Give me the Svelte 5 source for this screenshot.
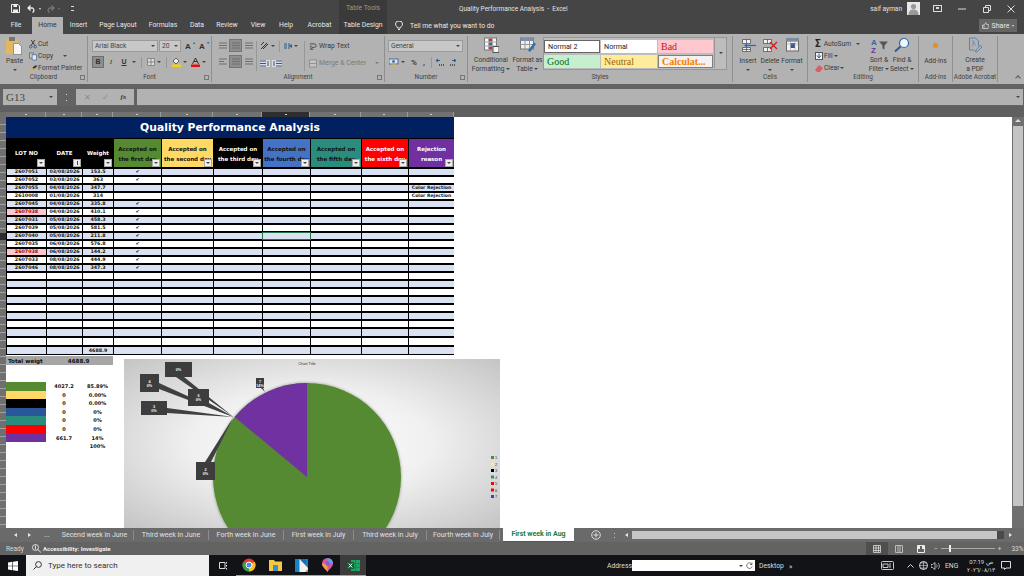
<script>
  const tabs = [
    ['File', 32], ['Home', 31], ['Insert', 31], ['Page Layout', 48], ['Formulas', 42], ['Data', 26],
    ['Review', 34], ['View', 28], ['Help', 28], ['Acrobat', 39], ['Table Design', 48]
  ];

  const cols = [40, 36, 31, 48, 52, 49, 48, 51, 47, 46];

  const heads = [
    { c: 'black', a: 'LOT NO' },
    { c: 'black', a: 'DATE', sort: true },
    { c: 'black', a: 'Weight' },
    { c: 'green dk', a: 'Accepted on', b: 'the first day' },
    { c: 'yellow dk', a: 'Accepted on', b: 'the second day' },
    { c: 'black', a: 'Accepted on', b: 'the third day' },
    { c: 'blue dk', a: 'Accepted on', b: 'the fourth day' },
    { c: 'teal dk', a: 'Accepted on', b: 'the fifth day' },
    { c: 'red', a: 'Accepted on', b: 'the sixth day' },
    { c: 'purple', a: 'Rejection', b: 'reason' }
  ];

  const lots = [
    ['2607051', '03/08/2026', '153.5', 1, ''],
    ['2607052', '03/08/2026', '363', 1, ''],
    ['2607055', '04/08/2026', '347.7', 0, 'Color Rejection'],
    ['2610008', '01/08/2026', '314', 0, 'Color Rejection'],
    ['2607045', '04/08/2026', '335.8', 1, ''],
    ['2607038', '04/08/2026', '410.1', 1, ''],
    ['2607031', '05/08/2026', '458.3', 1, ''],
    ['2607039', '05/08/2026', '581.5', 1, ''],
    ['2607040', '05/08/2026', '211.8', 1, ''],
    ['2607035', '06/08/2026', '576.8', 1, ''],
    ['2607038', '06/08/2026', '144.2', 1, ''],
    ['2607033', '08/08/2026', '444.9', 1, ''],
    ['2607046', '08/08/2026', '347.3', 1, '']
  ];
  const rows = Array.from({ length: 23 }, (_, i) => lots[i] || ['', '', i === 22 ? '4688.9' : '', 0, '']);

  const legend = [
    ['green', '4027.2', '85.89%'], ['yellow', '0', '0.00%'], ['black', '0', '0.00%'], ['navy', '0', '0%'],
    ['teal', '0', '0%'], ['red', '0', '0%'], ['purple', '661.7', '14%'], ['none', '', '100%']
  ];

  const sheets = [
    ['Secend week in June', 78], ['Third week in June', 75], ['Forth week in June', 75],
    ['First week in July', 70], ['Third week in July', 73], ['Fourth week in July', 73]
  ];

  const callouts = [
    { x: 165, y: 362, w: 27, h: 15, a: '', b: '0%' },
    { x: 140, y: 374, w: 19, h: 18, a: '4', b: '0%' },
    { x: 188, y: 389, w: 21, h: 17, a: '6', b: '0%' },
    { x: 141, y: 401, w: 26, h: 14, a: '3', b: '0%' },
    { x: 196, y: 462, w: 19, h: 18, a: '2', b: '0%' },
    { x: 256, y: 378, w: 8, h: 10, a: '7', b: '14%' }
  ];

  // leader lines narrow down to the point where the zero slices sit
  const leaders = [
    '176,377 184,377 233.5,417',
    '159,383 159,389 233.5,417',
    '203,405 209,403 233.5,417',
    '167,408 167,413 233.5,417',
    '205,462 211,462 233.5,417',
    '261,388 263,388 265,392'
  ];

  const chartLegend = ['#568a30', '#ffe699', '#000', '#2a8c7c', '#f00', '#f00', '#7030a0'];
</script>

<div class="app">
  <div class="titlebar">
    <div class="qat">
      <svg width="9" height="9" viewBox="0 0 9 9"><path d="M.5.5h6.500l1.500 1.500v6.500h-8z" fill="none" stroke="#eee"/><path d="M2.500 1h3.500v2h-3.500zM2 5.500h5v3h-5z" fill="#eee"/></svg>
      <svg class="undo" width="9" height="8" viewBox="0 0 9 8"><path d="M3.500.5L1 3l2.500 2.500M1 3h4.500a2.500 2.500 0 0 1 0 4.500" fill="none" stroke="#eee" stroke-width="1.300"/></svg>
      <span class="tiny-caret"></span>
      <svg class="redo" width="9" height="8" viewBox="0 0 9 8"><path d="M5.500.5L8 3 5.500 5.500M8 3H3.500a2.500 2.500 0 0 0 0 4.500" fill="none" stroke="#777" stroke-width="1.300"/></svg>
      <span class="tiny-caret dim"></span>
      <span class="custom"></span>
    </div>
    <div class="tools">Table Tools</div>
    <div class="doc">Quality Performance Analysis &nbsp;-&nbsp; Excel</div>
    <div class="user">saif ayman</div>
    <div class="avatar">
      <svg width="13" height="13" viewBox="0 0 13 13"><rect width="13" height="13" fill="#e8e8e8"/><circle cx="6.500" cy="4.500" r="2.600" fill="#999"/><path d="M1.500 13c0-4 2-5.500 5-5.500s5 1.500 5 5.500z" fill="#999"/></svg>
    </div>
    <div class="winctl">
      <svg width="9" height="7" viewBox="0 0 9 7"><rect x=".5" y=".5" width="8" height="6" fill="none" stroke="#ddd"/><path d="M3 2h3v2H3z" fill="#ddd"/></svg>
      <svg width="8" height="7" viewBox="0 0 8 7"><path d="M0 4h8" stroke="#ddd"/></svg>
      <svg width="8" height="8" viewBox="0 0 8 8"><path d="M.5 2.500h5v5h-5zM2.500 2.500v-2h5v5h-2" fill="none" stroke="#ddd"/></svg>
      <svg width="8" height="8" viewBox="0 0 8 8"><path d="M.5.500l7 7M7.500.500l-7 7" stroke="#ddd"/></svg>
    </div>
  </div>

  <div class="tabbar">
    {#each tabs as [name, w]}
      <div class="tab" class:active={name === 'Home'} class:design={name === 'Table Design'} style="width:{w}px">{name}</div>
    {/each}
    <svg class="bulb" width="8" height="10" viewBox="0 0 8 10"><path d="M2.500 7c0-1.500-2-2-2-4a3.500 3 0 0 1 7 0c0 2-2 2.500-2 4zM3 8.500h2" fill="none" stroke="#e8e8e8"/></svg>
    <div class="tell">Tell me what you want to do</div>
    <div class="share">
      <svg width="7" height="7" viewBox="0 0 7 7"><path d="M.5 3h1.500v3.500H.5zM2 3l2-2.500.5 2h2L6 6.500H2" fill="none" stroke="#ddd" stroke-width=".7"/></svg>
      Share <span class="tiny-caret"></span>
    </div>
  </div>

  <div class="ribbon">
    <section class="g clip">
      <div class="body">
        <div class="big paste">
          <svg width="17" height="19" viewBox="0 0 17 19"><rect x="0" y="3" width="12" height="15" fill="#e0b860"/><rect x="3" y="1" width="6" height="4" fill="#777"/><path d="M7.500 7.500h5l3 3v8h-8z" fill="#f6f6f6" stroke="#666" stroke-width=".6"/></svg>
          <span>Paste</span>
          <span class="caret"></span>
        </div>
        <div class="stack">
          <div class="line">
            <svg width="8" height="10" viewBox="0 0 9 10"><circle cx="2" cy="8" r="1.500" fill="none" stroke="#2a5a8a"/><circle cx="7" cy="8" r="1.500" fill="none" stroke="#2a5a8a"/><path d="M2.500 6.500L6.500.5M6.500 6.500L2.500.5" stroke="#333"/></svg>
            <span>Cut</span>
          </div>
          <div class="line">
            <svg width="8" height="9" viewBox="0 0 9 9"><path d="M.5.500h4.500v6H.5z" fill="#ccc" stroke="#667"/><path d="M3.500 2.500H8.500v6h-5z" fill="#e8e8e8" stroke="#57a"/></svg>
            <span>Copy</span><span class="caret push"></span>
          </div>
          <div class="line">
            <svg width="8" height="9" viewBox="0 0 9 9"><path d="M4 3l4-2.500 1 2-4 2.500z" fill="#333"/><path d="M.5 8l3.500-5 1.500 2.500z" fill="#e8a838"/></svg>
            <span>Format Painter</span>
          </div>
        </div>
      </div>
      <div class="lbl">Clipboard</div>
      <i class="launch"></i>
    </section>

    <section class="g font">
      <div class="body rows">
        <div class="r">
          <div class="select fname"><span>Arial Black</span><span class="caret"></span></div>
          <div class="select fsize"><span>20</span><span class="caret"></span></div>
          <b class="grow">A<sup>▴</sup></b>
          <b class="shrink">A<sup>▾</sup></b>
        </div>
        <div class="r tools-row">
          <span class="tb on bold">B</span>
          <span class="tb ital">I</span>
          <span class="tb under">U</span><span class="caret"></span>
          <span class="v"></span>
          <svg width="8" height="8" viewBox="0 0 8 8"><path d="M.5.500h7v7h-7zM4 .5v7M.5 4h7" fill="#ddd" stroke="#888"/></svg><span class="caret"></span>
          <span class="v"></span>
          <svg width="9" height="10" viewBox="0 0 9 10"><path d="M1 4l3-3 3 3-3 3z" fill="#eee" stroke="#444" stroke-width=".8"/><rect y="7.500" width="9" height="2.500" fill="#f2d21a"/></svg><span class="caret"></span>
          <svg width="9" height="10" viewBox="0 0 9 10"><path d="M1.500 7l3-6 3 6M3 4.500h3" fill="none" stroke="#333"/><rect y="7.500" width="9" height="2.500" fill="#e01010"/></svg><span class="caret"></span>
        </div>
      </div>
      <div class="lbl">Font</div>
      <i class="launch"></i>
    </section>

    <section class="g align">
      <div class="body">
        <div class="agrid">
          {#each ['top', 'mid on', 'bot', 'left', 'cen on', 'right'] as a}
            <span class="al {a}">
              <svg width="8" height="7" viewBox="0 0 8 7"><path d="M0 1h8M0 3.500h{a.startsWith('left') ? 5 : 8}M0 6h8" stroke="#6f6f6f" stroke-width="1.100"/></svg>
            </span>
          {/each}
        </div>
        <span class="vline first"></span>
        <div class="acol">
          <div class="ac-row">
            <svg width="9" height="8" viewBox="0 0 9 8"><path d="M1 7l6-6M3 7l5-5M1 3l3-3" stroke="#333"/></svg><span class="caret"></span>
            <span class="v"></span>
            <svg width="8" height="6" viewBox="0 0 8 6"><path d="M0 1h3M0 3h3M0 5h3M5 0v6" stroke="#2a5a9a"/><path d="M5 3l3-2v4z" fill="#2a5a9a"/></svg><span class="caret"></span>
          </div>
          <div class="ac-row">
            <svg width="10" height="7" viewBox="0 0 10 7"><rect width="10" height="7" fill="#ddd"/><path d="M0 1h6M0 3.500h6M0 6h6M8 1v5" stroke="#2a5a9a"/></svg>
            <svg width="10" height="7" viewBox="0 0 10 7"><rect width="10" height="7" fill="#ddd"/><path d="M4 1h6M4 3.500h6M4 6h6M2 1v5" stroke="#2a5a9a"/></svg>
          </div>
        </div>
        <span class="vline"></span>
        <div class="acol wide">
          <div class="ac-row">
            <svg width="8" height="9" viewBox="0 0 9 9"><path d="M1 1.500h5a2 2 0 0 1 0 4H3M1 4h1M1 7.500h4" fill="none" stroke="#444"/><path d="M3.500 3.500L1.500 5.500 3.500 7.500" fill="none" stroke="#2a5a9a"/></svg>
            <span class="txt">Wrap Text</span>
          </div>
          <div class="ac-row muted">
            <svg width="8" height="9" viewBox="0 0 9 9"><rect x=".5" y=".5" width="8" height="8" fill="#c4c4c4" stroke="#8c8c8c"/><path d="M1 4.500h7" stroke="#8c8c8c"/></svg>
            <span class="txt">Merge &amp; Center</span><span class="caret far"></span>
          </div>
        </div>
      </div>
      <div class="lbl">Alignment</div>
      <i class="launch"></i>
    </section>

    <section class="g number">
      <div class="body rows">
        <div class="select general"><span>General</span><span class="caret"></span></div>
        <div class="r nrow">
          <svg width="10" height="9" viewBox="0 0 10 9"><rect y="1" width="9" height="5" fill="#d8e4f2" stroke="#2a5a9a" stroke-width=".8"/><circle cx="4.500" cy="3.500" r="1.300" fill="#2a5a9a"/><path d="M2 6.500h6l-1 2H4z" fill="#e8b838"/></svg><span class="caret"></span>
          <b class="pct">%</b>
          <b class="comma">,</b>
          <span class="v"></span>
          <svg width="9" height="9" viewBox="0 0 9 9"><path d="M0 2.500h4M2 1L0 2.500 2 4" fill="none" stroke="#2a5a9a"/><path d="M3 7h6" stroke="#555" stroke-dasharray="1 1" stroke-width="2"/></svg>
          <svg width="9" height="9" viewBox="0 0 9 9"><path d="M5 2.500h4M7 1l2 1.500L7 4" fill="none" stroke="#2a5a9a"/><path d="M3 7h6" stroke="#555" stroke-dasharray="1 1" stroke-width="2"/></svg>
        </div>
      </div>
      <div class="lbl">Number</div>
      <i class="launch"></i>
    </section>

    <section class="g styles">
      <div class="body">
        <div class="big cf">
          <svg width="15" height="15" viewBox="0 0 15 15"><rect x=".5" y=".5" width="12" height="12" fill="#f5f5f5" stroke="#777"/><path d="M.5 4.500h12M.5 8.500h12M4.500 .5v12M8.500 .5v12" stroke="#aaa"/><rect x="5" y="1" width="3" height="3" fill="#d03030"/><rect x="5" y="5" width="3" height="3" fill="#2a6ab0"/><rect x="5" y="9" width="3" height="3" fill="#d03030"/><rect x="9" y="9" width="6" height="6" fill="#f4f4f4" stroke="#555"/></svg>
          <span>Conditional</span>
          <span>Formatting <i class="caret"></i></span>
        </div>
        <div class="big fat">
          <svg width="16" height="15" viewBox="0 0 16 15"><rect x=".5" y=".5" width="13" height="11" fill="#eee" stroke="#777"/><rect x=".5" y=".5" width="13" height="3" fill="#7d8ea8"/><path d="M.5 7h13M5 3.500v8M9.500 3.500v8" stroke="#999"/><path d="M8 13l6-8 2 1.500-6 8z" fill="#2f6fb0"/></svg>
          <span>Format as</span>
          <span>Table <i class="caret"></i></span>
        </div>
        <div class="gallery">
          <div class="cell n2">Normal 2</div>
          <div class="cell nm">Normal</div>
          <div class="cell bad">Bad</div>
          <div class="cell good">Good</div>
          <div class="cell neutral">Neutral</div>
          <div class="cell calc">Calculat...</div>
          <div class="more"><span class="caret"></span></div>
        </div>
      </div>
      <div class="lbl">Styles</div>
    </section>

    <section class="g cells">
      <div class="body">
        <div class="big bcell">
          <svg width="15" height="15" viewBox="0 0 15 15"><path d="M1.500 1.500h8v4h-8zM1.500 9.500h8v4h-8zM5.500 1.500v4M5.500 9.500v4M1.500 11.500h8" fill="#f2f2f2" stroke="#555" stroke-width=".8"/><path d="M6 7.500h9" stroke="#2a6ab0" stroke-width="1.300"/><path d="M3 7.500l3-2v4z" fill="#2a6ab0"/></svg>
          <span>Insert</span><span class="caret"></span>
        </div>
        <div class="big bcell">
          <svg width="16" height="15" viewBox="0 0 16 15"><path d="M1.500 1.500h8v4h-8zM1.500 9.500h8v4h-8zM5.500 1.500v4M5.500 9.500v4" fill="#f2f2f2" stroke="#555" stroke-width=".8"/><path d="M8 4l7 7M15 4l-7 7" stroke="#c92020" stroke-width="1.300"/></svg>
          <span>Delete</span><span class="caret"></span>
        </div>
        <div class="big bcell">
          <svg width="15" height="16" viewBox="0 0 15 16"><path d="M1 1.500h13" stroke="#2a6ab0"/><rect x="1.500" y="3.500" width="12" height="10" fill="#f4f4f4" stroke="#666"/><rect x="5.500" y="5.500" width="4.500" height="5" fill="#2a5aa0"/><path d="M1.500 6.500h12M5.500 3.500v10M10 3.500v10" stroke="#999" stroke-width=".6"/></svg>
          <span>Format</span><span class="caret"></span>
        </div>
      </div>
      <div class="lbl">Cells</div>
    </section>

    <section class="g editing">
      <div class="body">
        <div class="stack ed">
          <div class="line"><b class="sigma">Σ</b><span>AutoSum</span><span class="caret push"></span></div>
          <div class="line">
            <svg width="8" height="8" viewBox="0 0 8 8"><rect x=".5" y=".5" width="7" height="7" fill="#f4f4f4" stroke="#555"/><path d="M4 1.500v3.500M2 3.500L4 6l2-2.500" fill="none" stroke="#2a5aa0"/></svg>
            <span>Fill</span><span class="caret"></span>
          </div>
          <div class="line">
            <svg width="8" height="7" viewBox="0 0 8 7"><path d="M0 5l4-5 4 3-3 4H2z" fill="#d8606a"/></svg>
            <span>Clear</span><span class="caret"></span>
          </div>
        </div>
        <div class="big sort">
          <svg width="17" height="15" viewBox="0 0 17 15"><text x="0" y="7" class="az a">A</text><text x="0" y="15" class="az z">Z</text><path d="M8 4h9l-3.500 4v4l-2-1V8z" fill="#555"/></svg>
          <span>Sort &amp;</span><span>Filter <i class="caret"></i></span>
        </div>
        <div class="big find">
          <svg width="16" height="15" viewBox="0 0 16 15"><circle cx="10" cy="5.500" r="4.500" fill="#f2f6fa" stroke="#2a6ab0" stroke-width="1.200"/><path d="M6.500 9L1 14" stroke="#2a5aa0" stroke-width="2"/></svg>
          <span>Find &amp;</span><span>Select <i class="caret"></i></span>
        </div>
      </div>
      <div class="lbl">Editing</div>
    </section>

    <section class="g addins">
      <div class="body">
        <div class="big">
          <svg width="15" height="15" viewBox="0 0 15 15"><circle cx="7.500" cy="7.500" r="2.700" fill="#ed8f1f"/></svg>
          <span>Add-ins</span>
        </div>
      </div>
      <div class="lbl">Add-ins</div>
    </section>

    <section class="g acro">
      <div class="body">
        <div class="big">
          <svg width="15" height="15" viewBox="0 0 15 15"><path d="M2.500.5h6l3 3v5M2.500.5v12h5" fill="none" stroke="#5484b8"/><path d="M5 9c2-3 1-5 1-6 1 1 1 4 3 5" fill="none" stroke="#5484b8" stroke-width=".7"/><path d="M8 14l5-6 2 1.500-5 5z" fill="none" stroke="#5484b8"/></svg>
          <span>Create</span>
          <span>a PDF</span>
        </div>
      </div>
      <div class="lbl">Adobe Acrobat</div>
    </section>

    <div class="collapse"><span class="up"></span></div>
  </div>

  <div class="formula">
    <div class="namebox"><span>G13</span><span class="caret"></span></div>
    <div class="dots"></div>
    <div class="fbtns">
      <span class="x">✕</span><span class="x">✓</span><em>fx</em>
    </div>
    <div class="finput"><span class="caret"></span></div>
  </div>

  <div class="ruler">
    <div class="corner"></div>
    {#each cols as w, i}
      <div class="rc" class:sel={i === 6} style="width:{w}px"><i></i></div>
    {/each}
  </div>

  <div class="sheet">
    <div class="rowhead">
      <span class="selrow"></span>
    </div>
    <div class="grid-wrap">
      <div class="table">
        <div class="title">Quality Performance Analysis</div>
        {#each heads as h}
          <div class="head {h.c}">
            <div class="htext" class:single={!h.b}>
              <span>{h.a}</span>
              {#if h.b}<span>{h.b}</span>{/if}
            </div>
            <span class="filter" class:sorted={h.sort}></span>
          </div>
        {/each}
        {#each rows as row, i}
          <div class="c" class:alt={i % 2 === 0} class:flag={row[0] === '2607038'}>{row[0]}</div>
          <div class="c" class:alt={i % 2 === 0}>{row[1]}</div>
          <div class="c" class:alt={i % 2 === 0}>{row[2]}</div>
          <div class="c" class:alt={i % 2 === 0}>{row[3] ? '✔' : ''}</div>
          <div class="c" class:alt={i % 2 === 0}></div>
          <div class="c" class:alt={i % 2 === 0}></div>
          <div class="c" class:alt={i % 2 === 0} class:current={i === 8}></div>
          <div class="c" class:alt={i % 2 === 0}></div>
          <div class="c" class:alt={i % 2 === 0}></div>
          <div class="c reason" class:alt={i % 2 === 0}>{row[4]}</div>
        {/each}
      </div>

      <div class="total"><span>Total weigt</span><span>4688.9</span></div>

      <div class="legend">
        {#each legend as [color, value, pct]}
          <span class="sw {color}"></span>
          <span>{value}</span>
          <span>{pct}</span>
        {/each}
      </div>
    </div>

    <div class="chart">
      <svg width="376" height="169" viewBox="124 359 376 169">
        <defs>
          <filter id="soft" x="-10%" y="-10%" width="120%" height="120%">
            <feDropShadow dx="0" dy="0" stdDeviation="1.500" flood-color="#000" flood-opacity=".4"/>
          </filter>
        </defs>
        <text x="307" y="364.500" class="ctitle">Chart Title</text>
        <g filter="url(#soft)">
          <circle cx="307" cy="477" r="94" fill="#568a30"/>
          <path d="M307 477V383A94 94 0 0 0 234.600 417z" fill="#7030a0"/>
        </g>
        {#each leaders as points}
          <polygon {points} fill="#404040"/>
        {/each}
        {#each callouts as k}
          <rect x={k.x} y={k.y} width={k.w} height={k.h} fill="#3d3d3d"/>
          {#if k.a}
            <text x={k.x + k.w / 2} y={k.y + k.h / 2 - .5} class="cl">{k.a}</text>
            <text x={k.x + k.w / 2} y={k.y + k.h / 2 + 3.500} class="cl">{k.b}</text>
          {:else}
            <text x={k.x + k.w / 2} y={k.y + k.h / 2 + 1.500} class="cl">{k.b}</text>
          {/if}
        {/each}
        {#each chartLegend as color, i}
          <rect x="491" y={456 + i * 6.500} width="3" height="3" fill={color}/>
          <text x="495" y={459 + i * 6.500} class="lg">{i + 1}</text>
        {/each}
      </svg>
    </div>

    <div class="vscroll"><span class="upbtn"></span><span class="thumb"></span></div>
  </div>

  <div class="sheetbar">
    <div class="nav">
      <span class="tri l"></span><span class="tri r"></span><span class="ell">...</span>
    </div>
    {#each sheets as [name, w]}
      <div class="stab" style="width:{w}px">{name}</div>
    {/each}
    <div class="stab current">First week in Aug</div>
    <svg class="plus" width="10" height="10" viewBox="0 0 10 10"><circle cx="5" cy="5" r="4.300" fill="none" stroke="#ddd"/><path d="M5 2.500v5M2.500 5h5" stroke="#ddd"/></svg>
    <span class="vdots"></span>
    <div class="hscroll">
      <span class="tri l"></span>
      <span class="track"></span>
      <span class="endcap"></span>
      <span class="tri r"></span>
    </div>
  </div>

  <div class="status">
    <span class="ready">Ready</span>
    <svg width="10" height="9" viewBox="0 0 10 9"><circle cx="3.500" cy="3.500" r="3" fill="none" stroke="#ddd"/><path d="M5 5l4 3.500M3.500 1.500v4" stroke="#ddd"/></svg>
    <b class="acc">Accessibility: Investigate</b>
    <div class="views">
      <span class="vw on"><svg width="8" height="8" viewBox="0 0 8 8"><path d="M.5.500h7v7h-7zM3 .5v7M5.500 .5v7M.5 3h7M.5 5.500h7" fill="none" stroke="#eee" stroke-width=".7"/></svg></span>
      <span class="vw"><svg width="8" height="8" viewBox="0 0 8 8"><path d="M.5.500h7v7h-7zM3 .5v7M5 .5v7" fill="none" stroke="#bbb"/></svg></span>
      <span class="vw"><svg width="8" height="8" viewBox="0 0 8 8"><path d="M.5.500h7v7h-7z" fill="none" stroke="#eee"/><path d="M1 1h2v3H1zM5 1h2v3H5z" fill="#eee"/></svg></span>
    </div>
    <div class="zoom">
      <span>−</span>
      <span class="slider"><i></i></span>
      <span>+</span>
      <span class="pctz">33%</span>
    </div>
  </div>

  <div class="taskbar">
    <svg class="win" width="10" height="10" viewBox="0 0 10 10"><path d="M0 1.400L4.400.8v3.900H0zM5 .7L10 0v4.700H5zM0 5.300h4.400v3.900L0 8.600zM5 5.300h5V10l-5-.7z" fill="#fff"/></svg>
    <div class="search">
      <svg width="9" height="9" viewBox="0 0 9 9"><circle cx="5.500" cy="3.500" r="2.900" fill="none" stroke="#333"/><path d="M3.500 5.500L.5 8.500" stroke="#333"/></svg>
      <span>Type here to search</span>
    </div>
    <div class="apps">
      <span class="app-btn"><svg width="9" height="9" viewBox="0 0 9 9"><path d="M.5 1.500h5.500v6H.5zM7.500 1v1.500M7.500 4v1.500M7.500 7v1.500" fill="none" stroke="#ddd"/></svg></span>
      <span class="app-btn run"><svg width="14" height="14" viewBox="0 0 14 14"><circle cx="7" cy="7" r="6.500" fill="#e33b2e"/><path d="M7 7L12.630 3.750A6.500 6.500 0 0 1 7 13.500z" fill="#f6c026"/><path d="M7 7L7 13.500A6.500 6.500 0 0 1 1.370 3.750z" fill="#2fa04e"/><circle cx="7" cy="7" r="3" fill="#4a8cf0" stroke="#fff"/></svg></span>
      <span class="app-btn run"><svg width="13" height="11" viewBox="0 0 13 11"><path d="M0 0h5l1 1.500h7V11H0z" fill="#f4c842"/><rect x="4" y="5" width="5" height="6" fill="#3a8fd0"/></svg></span>
      <span class="app-btn run"><svg width="13" height="13" viewBox="0 0 13 13"><rect width="13" height="13" fill="#1484c4"/><path d="M5 0h6v9l2 2v2H5z" fill="#1a6fb0"/><path d="M4.500 0L13 9v4H4.500z" fill="#f2f2f2"/><path d="M10 13l3-3v3z" fill="#f08a1c"/></svg></span>
      <span class="app-btn run"><svg width="11" height="14" viewBox="0 0 11 14"><path d="M5.500 0a5.500 5.500 0 0 1 5.500 5.500C11 9 7 11 5.500 14 4 11 0 9 0 5.500A5.500 5.500 0 0 1 5.500 0z" fill="#e0529c"/><path d="M5.500 0a5.500 5.500 0 0 1 5.500 5.500H5.500z" fill="#5aa4e8"/><path d="M0 5.500h5.500V14C4 11 0 9 0 5.500z" fill="#f0a040"/><circle cx="5.500" cy="5.500" r="2.200" fill="#8a5ad0"/></svg></span>
      <span class="app-btn run xl"><svg width="13" height="11" viewBox="0 0 13 11"><rect x="4" width="9" height="11" fill="#21a366"/><path d="M8.500 0v11M4 3.700h9M4 7.300h9" stroke="#107c41" stroke-width=".7"/><rect y="2" width="7" height="7" fill="#185c37"/><path d="M1.800 3.500l3.400 4M5.200 3.500l-3.400 4" stroke="#fff"/></svg></span>
    </div>
    <div class="deskbar">
      <span class="addr-label">Address</span>
      <div class="addr">
        <span class="caret"></span>
        <svg width="7" height="7" viewBox="0 0 7 7"><path d="M5.800 2A2.800 2.800 0 1 0 6.200 4.500M6 .5v2H4" fill="none" stroke="#555" stroke-width=".8"/></svg>
      </div>
      <span>Desktop</span>
      <sup>»</sup>
    </div>
    <div class="tray">
      <svg class="kbd" width="13" height="9" viewBox="0 0 13 9"><rect x=".5" y=".5" width="12" height="8" rx="1" fill="none" stroke="#ccc"/><path d="M2 3h5v3.500H2zM9 2v5" fill="none" stroke="#ccc"/></svg>
      <svg width="7" height="4" viewBox="0 0 7 4"><path d="M.5 3.500l3-3 3 3" fill="none" stroke="#ddd"/></svg>
      <svg width="9" height="9" viewBox="0 0 9 9"><circle cx="4.500" cy="4.500" r="4" fill="none" stroke="#ddd"/><path d="M.5 4.500h8M4.500 .5v8M1.500 2h6M1.500 7h6" stroke="#ddd" stroke-width=".6"/></svg>
      <svg class="spk" width="9" height="8" viewBox="0 0 9 8"><path d="M0 2.500h1.500L4 .5v7L1.500 5.500H0z" fill="none" stroke="#ddd" stroke-width=".8"/><path d="M5.500 2.500a2 2 0 0 1 0 3M7 1a4 4 0 0 1 0 6" fill="none" stroke="#ddd" stroke-width=".7"/></svg>
      <span class="eng">ENG</span>
      <div class="clock"><span>07:19 ص</span><span>٢٠٢٦/٠٨/١٣</span></div>
      <svg width="10" height="9" viewBox="0 0 10 9"><path d="M.5.500h9v6.500H5L3.500 8.500V7h-3z" fill="none" stroke="#ddd"/></svg>
    </div>
  </div>
</div>

<style>
  :global(body) {
    margin: 0;
    background: #636363;
  }

  .app {
    width: 1024px;
    height: 576px;
    overflow: hidden;
    display: flex;
    flex-direction: column;
    font-family: Roboto, "Noto Sans", sans-serif;
    font-size: 6.700px;
    color: #333;
  }

  .caret {
    display: inline-block;
    width: 0;
    height: 0;
    border-left: 2px solid transparent;
    border-right: 2px solid transparent;
    border-top: 2px solid #444;
    flex: none;
  }

  .tiny-caret {
    display: inline-block;
    width: 0;
    height: 0;
    border-left: 1.5px solid transparent;
    border-right: 1.5px solid transparent;
    border-top: 2px solid #ddd;
  }

  .tiny-caret.dim {
    border-top-color: #777;
  }

  /* title bar */
  .titlebar {
    height: 17px;
    background: #454545;
    display: flex;
    align-items: center;
    color: #e4e4e4;
  }

  .qat {
    width: 339px;
    display: flex;
    align-items: center;
    padding-left: 11px;
    box-sizing: border-box;
  }

  .undo { margin-left: 7px; }
  .qat .tiny-caret { margin-left: 3px; }
  .redo { margin-left: 5px; }

  .custom {
    width: 3px;
    height: 3px;
    margin-left: 11px;
    border-top: 1px solid #ddd;
    border-bottom: 1px solid #ddd;
  }

  .tools {
    width: 48px;
    height: 17px;
    line-height: 17px;
    background: #3a3a3a;
    color: #999;
    text-align: center;
  }

  .doc {
    width: 72px;
    margin-left: 72px;
    white-space: nowrap;
    font-size: 6.500px;
  }

  .user {
    margin-left: auto;
    font-size: 6.500px;
  }

  .avatar {
    margin-left: 5px;
    height: 13px;
  }

  .winctl {
    width: 104px;
    display: flex;
    justify-content: space-between;
    align-items: center;
    padding: 0 9px 0 13px;
    box-sizing: border-box;
  }

  /* tabs */
  .tabbar {
    height: 17px;
    background: #454545;
    display: flex;
    align-items: center;
    color: #e8e8e8;
    font-size: 6.800px;
  }

  .tab {
    height: 17px;
    line-height: 17px;
    text-align: center;
    flex: none;
  }

  .tab.active {
    background: #b2b2b2;
    color: #333;
  }

  .tab.design {
    background: #3a3a3a;
  }

  .bulb { margin-left: 8px; }
  .tell { margin-left: 7px; }

  .share {
    margin-left: auto;
    margin-right: 7px;
    width: 38px;
    height: 13px;
    background: #666;
    display: flex;
    align-items: center;
    justify-content: center;
    gap: 3px;
    font-size: 7px;
  }

  /* ribbon */
  .ribbon {
    height: 50px;
    background: #b2b2b2;
    display: flex;
    padding-top: 2px;
    padding-bottom: 2px;
    box-sizing: border-box;
  }

  .g {
    position: relative;
    display: flex;
    flex-direction: column;
    flex: none;
    box-sizing: border-box;
    border-right: 1px solid #8f8f8f;
  }

  .body {
    flex: 1;
    display: flex;
    min-height: 0;
  }

  .lbl {
    height: 9px;
    line-height: 9px;
    text-align: center;
    color: #444;
    font-size: 6.400px;
  }

  .launch {
    position: absolute;
    right: 2px;
    bottom: 2px;
    width: 3px;
    height: 3px;
    border: 1px solid #777;
  }

  .big {
    display: flex;
    flex-direction: column;
    align-items: center;
    line-height: 8.500px;
    flex: none;
    padding-top: 1px;
    color: #3a3a3a;
    white-space: nowrap;
  }

  .big svg {
    height: 17px;
    margin-bottom: 3px;
  }

  .big > .caret { margin-top: 3px; }
  .big i.caret { vertical-align: middle; }

  .stack {
    display: flex;
    flex-direction: column;
    gap: 3px;
    padding-top: 3px;
    color: #3a3a3a;
  }

  .line {
    height: 9.500px;
    display: flex;
    align-items: center;
    gap: 1px;
    white-space: nowrap;
  }

  .clip { width: 88px; }
  .paste { width: 29px; padding-top: 0; }
  .paste svg { height: 19px; margin-bottom: 2px; }
  .push { margin-left: 9px; }

  .font { width: 124px; }

  .rows {
    flex-direction: column;
    padding: 4px 0 0 4px;
    gap: 4px;
  }

  .r {
    display: flex;
    align-items: center;
    height: 12px;
  }

  .select {
    height: 12px;
    box-sizing: border-box;
    background: #c8c8c8;
    border: 1px solid #9b9b9b;
    display: flex;
    align-items: center;
    justify-content: space-between;
    padding: 0 2px;
    color: #444;
    font-size: 6.700px;
  }

  .fname { width: 66px; margin-right: 1px; }
  .fsize { width: 22px; }

  .grow, .shrink {
    font-size: 8px;
    color: #333;
    margin-left: 4px;
    width: 10px;
    position: relative;
    font-family: "Liberation Sans", sans-serif;
  }

  .grow sup, .shrink sup {
    position: absolute;
    top: -2px;
    right: 0;
    font-size: 4px;
    color: #2a6ab0;
  }

  .tools-row svg { margin-right: 2px; }
  .tools-row .caret { margin-right: 4px; }

  .tb {
    width: 12px;
    height: 12px;
    line-height: 12px;
    text-align: center;
    font-family: "Liberation Sans", sans-serif;
    font-size: 7px;
    margin-right: 1px;
    box-sizing: border-box;
  }

  .tb.on {
    background: #8e8e8e;
    border: 1px solid #6e6e6e;
    line-height: 10px;
  }

  .bold { font-weight: 700; }
  .ital { font-style: italic; font-family: "Liberation Serif", serif; }
  .under { text-decoration: underline; font-weight: 700; margin-right: 2px; }

  .v {
    width: 1px;
    height: 11px;
    background: #979797;
    margin: 0 5px 0 1px;
  }

  .align { width: 173px; }
  .align .body { padding: 3px 0 0 4px; }

  .agrid {
    width: 39px;
    flex: none;
    display: grid;
    grid-template-columns: repeat(3, 13px);
    grid-template-rows: 13px 13px;
    row-gap: 3px;
    margin-right: 1px;
  }

  .al {
    display: flex;
    align-items: center;
    justify-content: center;
    box-sizing: border-box;
  }

  .al.on {
    background: #8e8e8e;
    border: 1px solid #757575;
  }

  .acol {
    display: flex;
    flex-direction: column;
    gap: 5px;
    padding-top: 1px;
    width: 38px;
    flex: none;
  }

  .acol.wide { width: auto; }

  .ac-row {
    height: 12px;
    display: flex;
    align-items: center;
    gap: 2px;
    white-space: nowrap;
  }

  .ac-row .v { margin: 0 2px; }

  .vline {
    width: 1px;
    height: 30px;
    background: #979797;
    margin: 2px 4px 0 6px;
    flex: none;
  }

  .vline.first { margin: 2px 3px 0 0; }

  .acol.wide .txt {
    font-size: 6.900px;
    color: #3a3a3a;
  }

  .muted .txt { color: #7b7b7b !important; }
  .far { margin-left: 7px; border-top-color: #7b7b7b; }

  .number { width: 83px; }
  .general { width: 75px; margin-left: -1px; }
  .nrow svg { margin-right: 2px; }
  .nrow .caret { margin-right: 6px; }
  .pct { font-size: 8px; margin-right: 6px; color: #444; }
  .comma { font-size: 8px; margin-right: 6px; color: #444; }
  .nrow .v { margin: 0 4px 0 0; }

  .styles { width: 265px; }
  .styles .body { padding-left: 2px; }
  .cf { width: 42px; }
  .fat { width: 31px; }

  .gallery {
    width: 184px;
    height: 33px;
    margin: 1px 0 0 0;
    background: #bdbdbd;
    border: 1px solid #969696;
    box-sizing: border-box;
    display: grid;
    grid-template-columns: 56px 56px 55px 1fr;
    grid-template-rows: 13px 13px;
    gap: 2px 1px;
    padding: 2px 0 0 0;
  }

  .cell {
    padding-left: 3px;
    line-height: 13px;
    box-sizing: border-box;
    white-space: nowrap;
    overflow: hidden;
    font-family: "Liberation Serif", serif;
    font-size: 10px;
  }

  .n2, .nm {
    background: #fff;
    color: #222;
    font-family: Roboto, sans-serif;
    font-size: 7.200px;
  }

  .n2 { border: 1px solid #666; line-height: 11px; }
  .bad { background: #ffc7ce; color: #b4152a; }
  .good { background: #c6efce; color: #0a6a20; }
  .neutral { background: #ffeb9c; color: #9c6500; }

  .calc {
    background: #f2f2f2;
    color: #fa7d00;
    font-weight: 700;
    border: 1px solid #7f7f7f;
    line-height: 11px;
  }

  .more {
    grid-column: 4;
    grid-row: 1 / 3;
    margin: -2px 0 0;
    border-left: 1px solid #969696;
    display: flex;
    align-items: center;
    justify-content: center;
  }

  .cells { width: 75px; }
  .cells .body { padding-left: 5px; gap: 2px; }
  .bcell { width: 20px; }

  .editing { width: 111px; }
  .editing .body { padding-left: 7px; }
  .ed { width: 53px; flex: none; }
  .ed .push { margin-left: 4px; }
  .sigma { font-size: 10px; line-height: 9px; color: #222; margin-right: 2px; }
  .sort { width: 22px; }
  .find { width: 24px; }

  .az {
    font-family: "Liberation Sans", sans-serif;
    font-size: 8px;
    font-weight: 700;
  }

  .az.a { fill: #2a6ab0; }
  .az.z { fill: #7030a0; }

  .addins { width: 34px; }
  .addins .body, .acro .body { justify-content: center; }
  .acro { width: 45px; }

  .collapse {
    flex: 1;
    display: flex;
    justify-content: flex-end;
    align-items: flex-end;
    padding: 0 4px 2px 0;
  }

  .up {
    width: 3px;
    height: 3px;
    border-left: 1px solid #555;
    border-top: 1px solid #555;
    transform: rotate(45deg);
  }

  /* formula bar */
  .formula {
    height: 17px;
    margin-top: 5px;
    display: flex;
    padding-bottom: 1px;
    box-sizing: border-box;
    gap: 3px;
    padding-left: 3px;
  }

  .namebox {
    width: 54px;
    background: #b2b2b2;
    display: flex;
    align-items: center;
    justify-content: space-between;
    padding: 0 4px 0 3px;
    box-sizing: border-box;
    font-family: "Liberation Serif", serif;
    font-size: 11px;
    color: #444;
  }

  .dots {
    width: 1px;
    height: 5px;
    margin: 5px 6px;
    border-top: 1px solid #ddd;
    border-bottom: 1px solid #ddd;
  }

  .fbtns {
    width: 58px;
    background: #b2b2b2;
    display: flex;
    align-items: center;
    justify-content: space-around;
    padding: 0 2px;
    box-sizing: border-box;
    font-size: 8px;
    color: #8a8a8a;
  }

  .fbtns em {
    font-family: "Liberation Serif", serif;
    color: #333;
    font-weight: 700;
    font-size: 7px;
  }

  .finput {
    width: 886px;
    background: #b2b2b2;
    display: flex;
    align-items: center;
    justify-content: flex-end;
    padding-right: 3px;
    box-sizing: border-box;
  }

  /* ruler */
  .ruler {
    height: 11px;
    padding-top: 6px;
    box-sizing: border-box;
    display: flex;
    background: #5f5f5f;
  }

  .corner {
    width: 6px;
    background: #6e6e6e;
  }

  .rc {
    box-sizing: border-box;
    background: #727272;
    border-right: 1px solid #9a9a9a;
    display: flex;
    align-items: center;
    justify-content: center;
  }

  .rc i {
    width: 2px;
    height: 1px;
    background: #cfcfcf;
  }

  .rc.sel { background: #2e2e2e; }

  /* sheet */
  .sheet {
    position: relative;
    height: 411px;
    background: #fff;
    display: flex;
    overflow: hidden;
  }

  .rowhead {
    position: relative;
    width: 6px;
    flex: none;
    background: repeating-linear-gradient(#6f6f6f 0 7px, #a2a2a2 7px 8px);
  }

  .selrow {
    position: absolute;
    top: 116px;
    left: 0;
    width: 6px;
    height: 7px;
    background: #2b2b2b;
  }

  .grid-wrap {
    width: 448px;
    flex: none;
  }

  .table {
    width: 448px;
    height: 238px;
    background: #000;
    display: grid;
    grid-template-columns: 40px 36px 31px 48px 52px 49px 48px 51px 47px 46px;
    grid-template-rows: 21px 30px repeat(20, 8px) repeat(3, 9px);
    font-family: "DejaVu Sans", sans-serif;
    font-weight: 700;
  }

  .title {
    grid-column: 1 / -1;
    background: #002060;
    color: #fff;
    font-size: 10.800px;
    display: flex;
    align-items: center;
    justify-content: center;
  }

  .head {
    position: relative;
    color: #fff;
    margin-left: 1px;
    margin-top: 1px;
    margin-bottom: 1px;
    overflow: hidden;
    font-size: 5.500px;
  }

  .head.dk { color: #111; }

  .black { background: #000; }
  .green { background: #568a30; }
  .yellow { background: #ffd966; }
  .blue { background: #4472c4; }
  .teal { background: #2a8c7c; }
  .red { background: #f00; }
  .purple { background: #7030a0; }
  .navy { background: #28589a; }
  .none { background: transparent; }

  .htext {
    display: flex;
    flex-direction: column;
    align-items: center;
    line-height: 9.500px;
    padding-top: 6px;
    white-space: nowrap;
  }

  .htext.single { padding-top: 10px; }

  .filter {
    position: absolute;
    right: 1px;
    bottom: 0;
    width: 8px;
    height: 8px;
    background: #eee;
    border: 1px solid #aaa;
    box-sizing: border-box;
  }

  .filter::after {
    content: "";
    position: absolute;
    left: 1px;
    top: 2px;
    border-left: 2px solid transparent;
    border-right: 2px solid transparent;
    border-top: 2px solid #444;
  }

  .filter.sorted::after {
    left: 3px;
    top: 1px;
    width: 1px;
    height: 4px;
    border: 0;
    background: #444;
  }

  .c {
    margin: 1px 0 1px 1px;
    background: #fff;
    display: flex;
    align-items: center;
    justify-content: center;
    font-size: 4.800px;
    line-height: 6px;
    color: #111;
    overflow: hidden;
    white-space: nowrap;
  }

  .c.alt { background: #d9e1f2; }
  .c.flag { background: #ffc7ce; color: #9c0006; }

  .c.current {
    outline: 1px solid #217346;
    background: #d9e1f2;
    position: relative;
  }

  .reason { font-size: 4.600px; }

  .total {
    width: 107px;
    height: 9px;
    margin-top: 1px;
    background: #a6a6a6;
    display: flex;
    align-items: center;
    padding-left: 2px;
    box-sizing: border-box;
    font-family: "DejaVu Sans", sans-serif;
    font-weight: 700;
    font-size: 5.600px;
    color: #111;
  }

  .total span:last-child { margin-left: 25px; }

  .legend {
    margin-top: 17px;
    display: grid;
    grid-template-columns: 40px 36px 31px;
    grid-auto-rows: 8.600px;
    font-family: "DejaVu Sans", sans-serif;
    font-weight: 700;
    font-size: 5px;
    color: #111;
    text-align: center;
    line-height: 8.600px;
  }

  .sw {
    height: 8.600px;
    box-sizing: border-box;
  }

  /* chart */
  .chart {
    position: absolute;
    left: 124px;
    top: 242px;
    width: 376px;
    height: 169px;
    background: radial-gradient(ellipse at 50% 50%, #fff 0%, #f0f0f0 45%, #c4c4c4 100%);
  }

  .chart svg { display: block; }

  .ctitle {
    font-family: "Liberation Sans", sans-serif;
    font-size: 3.800px;
    text-anchor: middle;
    fill: #333;
  }

  .cl {
    font-family: "Liberation Sans", sans-serif;
    font-size: 3.800px;
    font-weight: 700;
    text-anchor: middle;
    fill: #f2f2f2;
  }

  .lg {
    font-family: "Liberation Sans", sans-serif;
    font-size: 4px;
    fill: #333;
  }

  .vscroll {
    position: absolute;
    top: 0;
    right: 0;
    width: 12px;
    height: 411px;
    background: #6f6f6f;
  }

  .upbtn {
    position: absolute;
    top: 2px;
    left: 3px;
    border-left: 3px solid transparent;
    border-right: 3px solid transparent;
    border-bottom: 3px solid #ddd;
  }

  .thumb {
    position: absolute;
    top: 9px;
    left: 1px;
    width: 10px;
    height: 380px;
    background: #c4c4c4;
  }

  /* sheet tabs */
  .sheetbar {
    height: 14px;
    background: #6a6a6a;
    display: flex;
    align-items: center;
    color: #e0e0e0;
    font-size: 7px;
  }

  .nav {
    width: 56px;
    display: flex;
    align-items: center;
    padding-left: 14px;
    gap: 11px;
    box-sizing: border-box;
    flex: none;
  }

  .ell { margin-left: 2px; font-size: 7px; line-height: 7px; }

  .tri {
    width: 0;
    height: 0;
    border-top: 2px solid transparent;
    border-bottom: 2px solid transparent;
  }

  .tri.l { border-right: 3px solid #e8e8e8; }
  .tri.r { border-left: 3px solid #e8e8e8; }

  .stab {
    text-align: center;
    white-space: nowrap;
    flex: none;
    height: 10px;
    line-height: 10px;
    border-right: 1px solid #8c8c8c;
    box-sizing: border-box;
  }

  .stab.current {
    width: 71px;
    height: 14px;
    line-height: 13px;
    margin-left: 3px;
    background: #fff;
    color: #1c7a46;
    font-weight: 700;
    border-right: 0;
    border-bottom: 1px solid #1c7a46;
  }

  .plus { margin-left: 17px; }

  .vdots {
    width: 1px;
    height: 3px;
    margin-left: 13px;
    border-top: 1px solid #ccc;
    border-bottom: 1px solid #ccc;
  }

  .hscroll {
    width: 394px;
    margin-left: 7px;
    display: flex;
    align-items: center;
    height: 8px;
  }

  .hscroll .tri.l { margin: 0 4px 0 3px; }
  .track { width: 365px; height: 8px; background: #c6c6c6; }
  .endcap { width: 7px; height: 8px; background: #4a4a4a; }
  .hscroll .tri.r { margin-left: 5px; }

  /* status bar */
  .status {
    height: 13px;
    background: #636363;
    display: flex;
    align-items: center;
    color: #d8d8d8;
    padding-left: 6px;
    font-size: 6.500px;
  }

  .ready { width: 26px; }

  .acc {
    margin-left: 1px;
    font-size: 6px;
    color: #eee;
  }

  .views {
    margin-left: auto;
    display: flex;
    height: 13px;
  }

  .vw {
    width: 22px;
    display: flex;
    align-items: center;
    justify-content: center;
  }

  .vw.on { background: #4f4f4f; }

  .zoom {
    width: 92px;
    display: flex;
    align-items: center;
    padding-left: 2px;
    box-sizing: border-box;
    gap: 3px;
  }

  .slider {
    position: relative;
    width: 54px;
    height: 1px;
    background: #aaa;
  }

  .slider i {
    position: absolute;
    left: 8px;
    top: -3px;
    width: 2px;
    height: 7px;
    background: #eee;
  }

  .pctz { margin-left: 7px; }

  /* taskbar */
  .taskbar {
    height: 21px;
    background: #111316;
    display: flex;
    align-items: center;
    color: #ddd;
    font-size: 6.800px;
  }

  .win { margin-left: 8px; flex: none; }

  .search {
    width: 183px;
    height: 21px;
    margin-left: 8px;
    background: #f0f0f0;
    display: flex;
    align-items: center;
    gap: 6px;
    padding-left: 7px;
    box-sizing: border-box;
    font-size: 8px;
    color: #333;
    flex: none;
  }

  .apps {
    display: flex;
    margin-left: 1px;
    height: 21px;
    flex: none;
  }

  .app-btn {
    width: 26px;
    height: 21px;
    display: flex;
    align-items: center;
    justify-content: center;
    box-sizing: border-box;
  }

  .app-btn.run { border-bottom: 1px solid #6fb2e8; }
  .app-btn.xl { background: #3c3c3c; }

  .deskbar {
    display: flex;
    align-items: center;
    margin-left: 241px;
    flex: none;
  }

  .addr-label {
    width: 25px;
    white-space: nowrap;
  }

  .addr {
    width: 123px;
    height: 11px;
    margin: 0 4px 0 0;
    background: #fff;
    display: flex;
    align-items: center;
    justify-content: flex-end;
    gap: 3px;
    padding-right: 2px;
    box-sizing: border-box;
  }

  .deskbar sup {
    margin-left: 5px;
    font-size: 7px;
    line-height: 7px;
    align-self: flex-start;
    margin-top: 4px;
  }

  .tray {
    margin-left: auto;
    display: flex;
    align-items: center;
    gap: 5px;
    padding-right: 13px;
  }

  .kbd { margin-right: 8px; }
  .spk { margin-left: -2px; }
  .eng { width: 13px; }

  .clock {
    width: 30px;
    display: flex;
    flex-direction: column;
    align-items: center;
    line-height: 8px;
    margin-left: 3px;
    font-size: 6px;
    white-space: nowrap;
  }
</style>
